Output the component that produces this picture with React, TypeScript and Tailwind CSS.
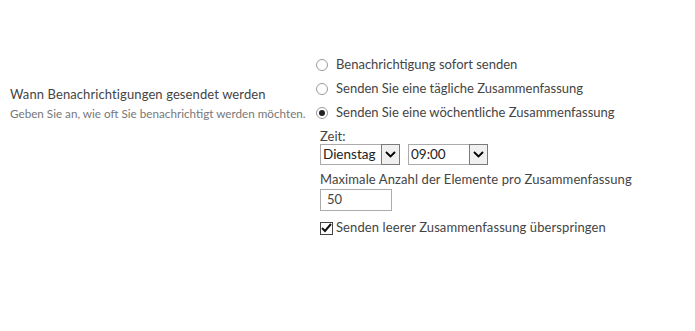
import { ReactNode } from 'react';

const font = { fontFamily: '"Segoe UI", Lato, "Liberation Sans", sans-serif' };

function Radio({ checked, label }: { checked?: boolean; label: string }) {
  return (
    <div className="flex h-[24px] items-center">
      <span className="ml-[3px] flex h-[12px] w-[12px] items-center justify-center rounded-full border border-[#9a9a9a] bg-white">
        {checked && <span className="h-[6px] w-[6px] rounded-full bg-[#222]" />}
      </span>
      <span className="ml-[8px] text-[13px] text-[#444]">{label}</span>
    </div>
  );
}

function Chevron() {
  return (
    <svg width="11" height="7" viewBox="0 0 11 7">
      <path d="M1 1 L5.5 5.5 L10 1" fill="none" stroke="#000" strokeWidth="1.8" />
    </svg>
  );
}

function Select({ value, width }: { value: string; width: string }) {
  return (
    <div className={`flex h-[21px] items-stretch border border-[#ababab] bg-white ${width}`}>
      <span className="flex flex-1 items-center pl-[2px] text-[13.5px] leading-none text-[#222]">{value}</span>
      <span className="m-[-1px] flex w-[19px] items-center justify-center border border-[#7a7a7a] bg-[#f0f0f0]">
        <Chevron />
      </span>
    </div>
  );
}

function Block({ children }: { children: ReactNode }) {
  return <div className="pl-[7px]">{children}</div>;
}

export default function App() {
  return (
    <div className="h-[331px] w-[695px] bg-white pt-[53px]" style={font}>
      <div className="flex">
        <div className="w-[313px] pl-[10px] pt-[32px]">
          <p className="text-[13px] leading-[18px] tracking-[0.1px] text-[#444]">Wann Benachrichtigungen gesendet werden</p>
          <p className="mt-[2px] text-[11.7px] leading-[16px] text-[#777]">
            Geben Sie an, wie oft Sie benachrichtigt werden möchten.
          </p>
        </div>

        <div>
          <Radio label="Benachrichtigung sofort senden" />
          <Radio label="Senden Sie eine tägliche Zusammenfassung" />
          <Radio checked label="Senden Sie eine wöchentliche Zusammenfassung" />

          <Block>
            <p className="mt-[3px] text-[13px] leading-[16px] text-[#444]">Zeit:</p>
            <div className="flex gap-[8px]">
              <Select value="Dienstag" width="w-[80px]" />
              <Select value="09:00" width="w-[80px]" />
            </div>
            <p className="mt-[6px] text-[13px] leading-[17px] tracking-[0.1px] text-[#444]">Maximale Anzahl der Elemente pro Zusammenfassung</p>
            <div className="mt-[1px] flex h-[22px] w-[72px] items-center border border-[#ababab] pl-[6px] text-[13px] text-[#444]">
              50
            </div>
            <div className="mt-[8px] flex h-[18px] items-center">
              <span className="flex h-[13px] w-[13px] items-center justify-center border border-[#444] bg-white">
                <svg width="11" height="10" viewBox="0 0 11 10">
                  <path d="M1 5 L4 8 L10 1" fill="none" stroke="#111" strokeWidth="2" />
                </svg>
              </span>
              <span className="ml-[3px] text-[13px] tracking-[0.1px] text-[#444]">Senden leerer Zusammenfassung überspringen</span>
            </div>
          </Block>
        </div>
      </div>
    </div>
  );
}
